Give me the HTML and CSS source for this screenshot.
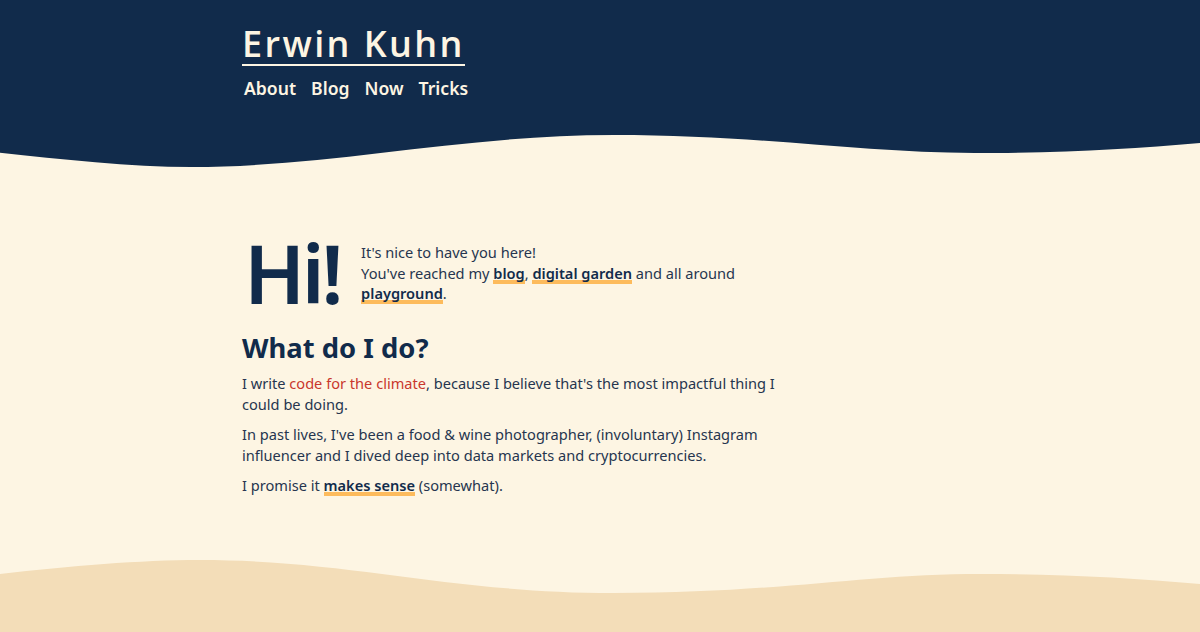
FILE: index.html
```html
<!DOCTYPE html>
<html lang="en">
<head>
<meta charset="utf-8">
<title>Erwin Kuhn</title>
<link rel="stylesheet" href="styles.css">
</head>
<body>
<header class="site-header">
  <div class="container header-inner">
    <a class="site-title" href="#">Erwin Kuhn</a>
    <nav class="nav">
      <a href="#">About</a>
      <a href="#">Blog</a>
      <a href="#">Now</a>
      <a href="#">Tricks</a>
    </nav>
  </div>
</header>
<svg class="wave wave-top" viewBox="0 0 1197 38" preserveAspectRatio="none" aria-hidden="true">
  <path d="M0 0 H1197 V11 C1130 17 1060 21 972 21 C860 21 760 3 612 3 C460 3 330 35 191 35 C130 35 60 27 0 20.7 Z" fill="#112b4b"/>
</svg>
<main class="container main">
  <section class="hello">
    <div class="hi">Hi!</div>
    <p class="hello-text">It's nice to have you here!<br>You've reached my <a class="hl" href="#">blog</a>, <a class="hl" href="#">digital garden</a> and all around <a class="hl" href="#">playground</a>.</p>
  </section>
  <h2 class="heading">What do I do?</h2>
  <p class="para">I write <a class="red" href="#">code for the climate</a>, because I believe that's the most impactful thing I could be doing.</p>
  <p class="para">In past lives, I've been a food &amp; wine photographer, (involuntary) Instagram influencer and I dived deep into data markets and cryptocurrencies.</p>
  <p class="para">I promise it <a class="hl" href="#">makes sense</a> (somewhat).</p>
</main>
<footer class="site-footer">
  <svg class="wave wave-bottom" viewBox="0 0 1197 40" preserveAspectRatio="none" aria-hidden="true">
    <path d="M0 18 C70 10 140 4 199 4 C350 4 450 37 612 37 C780 37 860 18 979 18 C1060 18 1130 22 1197 28 V40 H0 Z" fill="#f3ddb8"/>
  </svg>
  <div class="footer-body"></div>
</footer>
</body>
</html>
```
FILE: styles.css
```css
html {
  background: #fdf5e3;
}
body {
  margin: 0;
  font-family: "Noto Sans", "Open Sans", sans-serif;
  color: #26354f;
  font-size: 14.6px;
  line-height: 20.5px;
}
.container {
  max-width: 716px;
  margin: 0 auto;
}
.site-header {
  background: #112b4b;
  height: 132px;
}
.header-inner {
  padding-top: 25px;
  display: flex;
  flex-direction: column;
  align-items: flex-start;
}
.site-title {
  color: #fdf5e3;
  font-family: "Open Sans", sans-serif;
  font-weight: 600;
  font-size: 36px;
  letter-spacing: 2.4px;
  line-height: 40px;
  text-decoration: none;
  border-bottom: 2px solid #fdf5e3;
  margin-top: -1px;
  padding-bottom: 0;
}
.nav {
  display: flex;
  gap: 15px;
  margin-top: 10px;
  margin-left: 2px;
}
.nav a {
  color: #fdf5e3;
  text-decoration: none;
  font-weight: 600;
  font-size: 17.6px;
  line-height: 24px;
}
.wave {
  display: block;
  width: 100%;
}
.wave-top {
  height: 38px;
}
.main {
  padding-top: 68px;
  height: 318px;
  box-sizing: content-box;
}
.hello {
  display: flex;
  align-items: flex-start;
  gap: 21px;
}
.hi {
  color: #112b4b;
  font-weight: 600;
  font-size: 81px;
  line-height: 76px;
  letter-spacing: -3.5px;
  margin: -3px 0 0 2px;
  height: 76px;
}
.hello-text {
  margin: 4px 0 0;
  max-width: 400px;
}
a.hl {
  color: #112b4b;
  font-weight: 600;
  text-decoration: none;
  background: linear-gradient(#fdbb5c, #fdbb5c) 0 100% / 100% 4px no-repeat;
  padding-bottom: 1px;
}
a.red {
  color: #c9372c;
  text-decoration: none;
}
.heading {
  color: #112b4b;
  font-size: 27.4px;
  line-height: 34px;
  font-weight: 700;
  margin: 20px 0 8px;
}
.para {
  margin: 0 0 10px;
  max-width: 545px;
}
.wave-bottom {
  height: 40px;
}
.footer-body {
  background: #f3ddb8;
  height: 36px;
}
```
